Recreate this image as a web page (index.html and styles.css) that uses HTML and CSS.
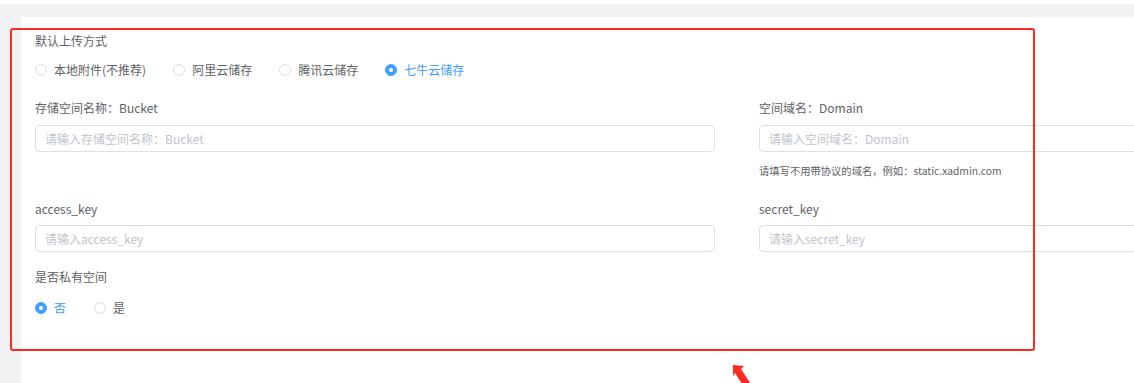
FILE: index.html
```html
<!DOCTYPE html>
<html lang="zh-CN">
<head>
  <meta charset="UTF-8" />
  <title>上传设置</title>
  <link rel="stylesheet" href="styles.css">
</head>
<body>

  <div class="topbar"></div>

  <div class="page">
    <div class="side"></div>

    <div class="card">
      <div class="form-item first">
        <div class="label">默认上传方式</div>
        <div class="radios">
          <label class="radio"><span class="dot"></span>本地附件(不推荐)</label>
          <label class="radio"><span class="dot"></span>阿里云储存</label>
          <label class="radio"><span class="dot"></span>腾讯云储存</label>
          <label class="radio checked"><span class="dot"></span>七牛云储存</label>
        </div>
      </div>

      <div class="cols row-bucket">
        <div class="form-item">
          <div class="label">存储空间名称：Bucket</div>
          <input class="input" type="text" placeholder="请输入存储空间名称：Bucket" />
        </div>
        <div class="form-item">
          <div class="label">空间域名：Domain</div>
          <input class="input" type="text" placeholder="请输入空间域名：Domain" />
          <div class="help">请填写不用带协议的域名，例如：static.xadmin.com</div>
        </div>
      </div>

      <div class="cols row-keys">
        <div class="form-item">
          <div class="label">access_key</div>
          <input class="input" type="text" placeholder="请输入access_key" />
        </div>
        <div class="form-item">
          <div class="label">secret_key</div>
          <input class="input" type="text" placeholder="请输入secret_key" />
        </div>
      </div>

      <div class="form-item">
        <div class="label">是否私有空间</div>
        <div class="radios private">
          <label class="radio checked"><span class="dot"></span>否</label>
          <label class="radio"><span class="dot"></span>是</label>
        </div>
      </div>
    </div>
  </div>

  <!-- annotation drawn over the screenshot -->
  <div class="mark"></div>
  <svg class="arrow" width="40" height="30" viewBox="0 0 40 30">
    <polygon points="3,4 14,5 11,8 24,28 18,32 5,12 3,15" fill="#ff2a1f" />
  </svg>

</body>
</html>
```

FILE: styles.css
```css
body {
  margin: 0;
  font-family: "Noto Sans CJK SC", "Noto Sans", sans-serif;
  background: #fff;
  color: #606266;
  overflow: hidden;
}

.topbar {
  margin-top: 4px;
  height: 13px;
  background: #f1f2f4;
}

.page {
  display: flex;
  height: 366px;
  overflow: hidden;
}

.side {
  width: 21px;
  flex-shrink: 0;
  background: #f1f2f4;
}

.card {
  flex: 1;
  min-width: 0;
  padding: 14px 0 0 14px;
  background: #fff;
}

.label {
  font-size: 12px;
  line-height: 20px;
  height: 20px;
}

.form-item.first {
  margin-bottom: 18px;
}

.radios {
  display: flex;
  gap: 27px;
  margin-top: 9px;
  height: 20px;
  align-items: center;
}

.radios.private {
  margin-top: 11px;
  gap: 28px;
}

.radio {
  display: flex;
  align-items: center;
  gap: 7px;
  font-size: 12px;
  color: #606266;
  line-height: 20px;
}

.dot {
  width: 10px;
  height: 10px;
  border: 1px solid #dcdfe6;
  border-radius: 50%;
  box-sizing: content-box;
  position: relative;
  background: #fff;
}

.radio.checked {
  color: #409eff;
}

.radio.checked .dot {
  background: #409eff;
  border-color: #409eff;
}

.radio.checked .dot::after {
  content: "";
  position: absolute;
  left: 3px;
  top: 3px;
  width: 4px;
  height: 4px;
  border-radius: 50%;
  background: #fff;
}

/* second column is cut off by the window, as in the original capture */
.cols {
  display: grid;
  grid-template-columns: 680px 680px;
  column-gap: 44px;
}

.row-bucket {
  margin-bottom: 19px;
}

.row-keys {
  margin-bottom: 15px;
}

.input {
  display: block;
  box-sizing: border-box;
  width: 100%;
  height: 27px;
  margin-top: 7px;
  padding: 0 9px;
  border: 1px solid #dcdfe6;
  border-radius: 4px;
  font-family: inherit;
  font-size: 12px;
  color: #606266;
  outline: none;
}

.row-keys .input {
  margin-top: 6px;
}

.input::placeholder {
  color: #c0c4cc;
}

.help {
  margin-top: 10px;
  font-size: 10.3px;
  line-height: 18px;
  color: #606266;
}

.mark {
  position: absolute;
  left: 10px;
  top: 28px;
  width: 1021px;
  height: 319px;
  border: 2px solid #ff2a1f;
  border-radius: 3px;
}

.arrow {
  position: absolute;
  left: 730px;
  top: 361px;
  overflow: visible;
}
```
